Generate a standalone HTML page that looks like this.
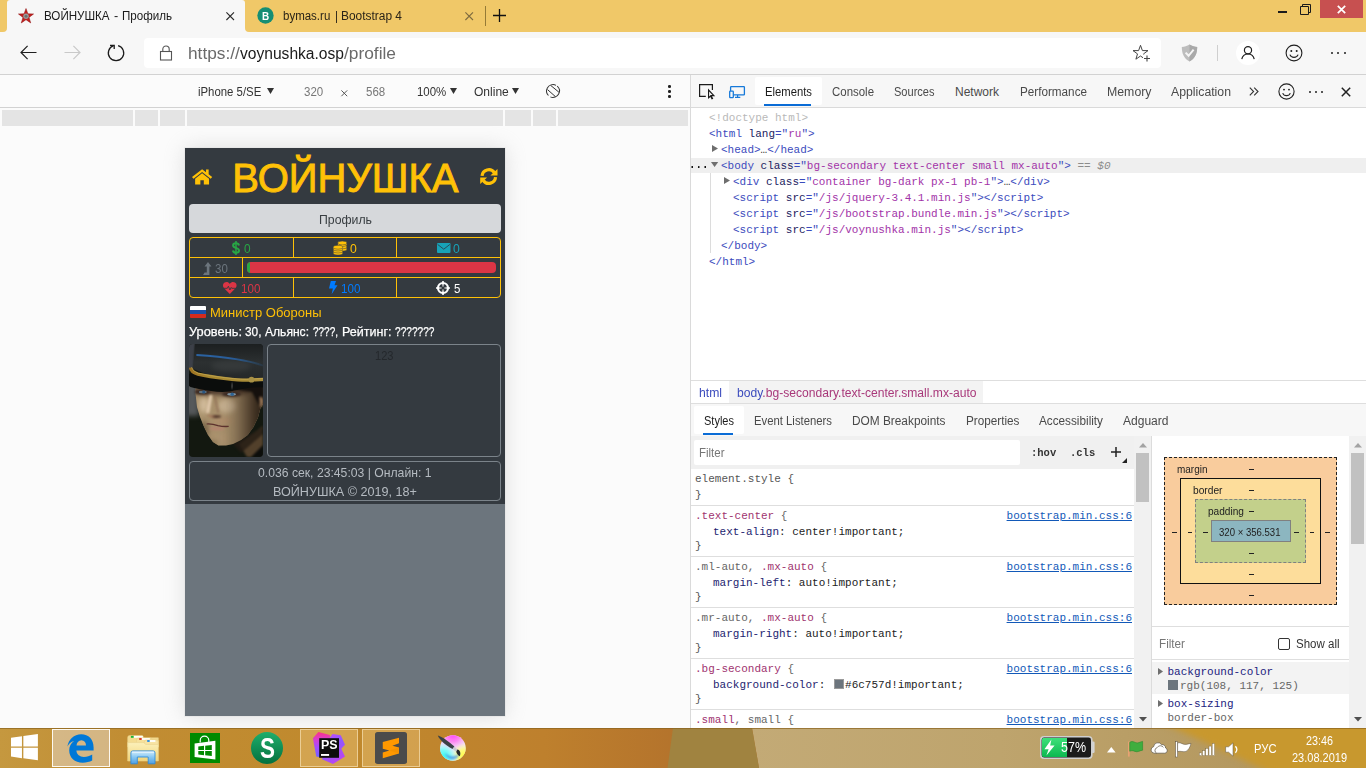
<!DOCTYPE html>
<html lang="ru"><head><meta charset="utf-8"><title>ВОЙНУШКА - Профиль</title>
<style>
html,body{margin:0;padding:0}
body{width:1366px;height:768px;overflow:hidden;position:relative;background:#f7f7f7;font-family:"Liberation Sans", "DejaVu Sans", sans-serif;}
.b{position:absolute;box-sizing:border-box}
.t{position:absolute;white-space:pre;line-height:20px;height:20px;transform-origin:0 50%;font-family:"Liberation Sans", "DejaVu Sans", sans-serif;}
.m{font-family:"Liberation Mono", "DejaVu Sans Mono", monospace;}
svg{position:absolute;overflow:visible}
</style></head>
<body>
<div class="b" style="left:0px;top:0px;width:1366px;height:32px;background:#f0c868;"></div>
<div class="b" style="left:7px;top:0px;width:238px;height:32px;background:#f7f7f7;border-radius:3px 3px 0 0;"></div>
<svg style="left:3px;top:28px;" width="4" height="4" viewBox="0 0 4 4"><path d="M4 0V4H0A4 4 0 0 0 4 0Z" fill="#f7f7f7"/></svg>
<svg style="left:245px;top:28px;" width="4" height="4" viewBox="0 0 4 4"><path d="M0 0V4H4A4 4 0 0 1 0 0Z" fill="#f7f7f7"/></svg>
<div class="b" style="left:0px;top:32px;width:1366px;height:42px;background:#f7f7f7;"></div>
<div class="b" style="left:0px;top:74px;width:1366px;height:1px;background:#d2d2d2;"></div>
<svg style="left:17.8px;top:8.2px;" width="16" height="16" viewBox="0 0 18 18"><path d="M9 0.6 L11.1 6.6 L17.5 6.7 L12.4 10.6 L14.3 16.8 L9 13.1 L3.7 16.8 L5.6 10.6 L0.5 6.7 L6.9 6.6 Z" fill="#c4201f" stroke="#8e1414" stroke-width=".6"/><circle cx="9" cy="9.4" r="3.1" fill="#9a9a9a"/><circle cx="9" cy="9.4" r="1.6" fill="#6e6e6e"/></svg>
<span class="t" style="top:6px;font-size:12px;color:#1b1b1b;left:44.30px;transform:scaleX(0.9667);">ВОЙНУШКА</span>
<span class="t" style="top:6px;font-size:12px;color:#1b1b1b;left:114.00px;transform:scaleX(1.0500);">-</span>
<span class="t" style="top:6px;font-size:12px;color:#1b1b1b;left:122.00px;transform:scaleX(0.9650);">Профиль</span>
<svg style="left:226.3px;top:12.3px;" width="8.4" height="8.4" viewBox="0 0 8.4 8.4"><path d="M.4 .4L8 8M8 .4L.4 8" stroke="#2b2b2b" stroke-width="1.1" fill="none"/></svg>
<svg style="left:256.5px;top:7.4px;" width="17" height="17" viewBox="0 0 17 17"><circle cx="8.5" cy="8.5" r="8.15" fill="#158e74"/></svg>
<span class="t" style="top:6px;font-size:10.5px;color:#fff;font-weight:700;left:261.60px;transform:scaleX(0.9481);">B</span>
<span class="t" style="top:6px;font-size:12px;color:#2a2418;left:283.30px;transform:scaleX(0.9583);">bymas.ru</span>
<span class="t" style="top:6px;font-size:12px;color:#2a2418;left:334.60px;transform:scaleX(0.9600);">|</span>
<span class="t" style="top:6px;font-size:12px;color:#2a2418;left:341.00px;transform:scaleX(0.9939);">Bootstrap 4</span>
<svg style="left:465.2px;top:12.3px;" width="8.4" height="8.4" viewBox="0 0 8.4 8.4"><path d="M.4 .4L8 8M8 .4L.4 8" stroke="#7d6a3f" stroke-width="1.1" fill="none"/></svg>
<div class="b" style="left:485px;top:6px;width:1px;height:20px;background:#957b36;"></div>
<svg style="left:493px;top:9.1px;" width="13" height="13" viewBox="0 0 13 13"><path d="M6.5 0V13M0 6.5H13" stroke="#111" stroke-width="1.3" fill="none"/></svg>
<div class="b" style="left:1278px;top:11px;width:9px;height:2px;background:#1b1b1b;"></div>
<svg style="left:1300px;top:4px;" width="12" height="12" viewBox="0 0 12 12"><path d="M.5 2.5H8.5V10.5H.5ZM2.5 2.5V.5H10.5V8.5H8.5" stroke="#1b1b1b" stroke-width="1" fill="none"/></svg>
<div class="b" style="left:1320px;top:0px;width:43px;height:18px;background:#c75050;"></div>
<svg style="left:1337px;top:5px;" width="9" height="9" viewBox="0 0 9 9"><path d="M.8 .8L8.2 8.2M8.2 .8L.8 8.2" stroke="#fff" stroke-width="1.7" fill="none"/></svg>
<svg style="left:20px;top:45px;" width="17" height="15" viewBox="0 0 17 15"><path d="M16.5 7.5H1.2M7.6 .9L1 7.5L7.6 14.1" stroke="#1f1f1f" stroke-width="1.2" fill="none"/></svg>
<svg style="left:64px;top:45px;" width="17" height="15" viewBox="0 0 17 15"><path d="M.5 7.5H15.8M9.4 .9L16 7.5L9.4 14.1" stroke="#c9c9c9" stroke-width="1.2" fill="none"/></svg>
<svg style="left:106.9px;top:44.05px;" width="18" height="18" viewBox="0 0 18 18"><path d="M11.1 1.6A7.7 7.7 0 1 1 6.6 1.7" stroke="#1b1b1b" stroke-width="1.25" fill="none"/><path d="M3 1.3H7.2V5.1" stroke="#1b1b1b" stroke-width="1.3" fill="none"/></svg>
<div class="b" style="left:144px;top:38px;width:1017px;height:30px;background:#fff;border-radius:4px;"></div>
<svg style="left:159px;top:45px;" width="14" height="16" viewBox="0 0 14 16"><rect x="1.5" y="6.5" width="11" height="8.5" fill="none" stroke="#555" stroke-width="1.1"/><path d="M3.8 6.5V4.2A3.2 3.2 0 0 1 10.2 4.2V6.5" fill="none" stroke="#555" stroke-width="1.1"/></svg>
<span class="t" style="top:44px;font-size:16px;color:#6a6a6a;left:188.30px;transform:scaleX(1.0785);">https://</span>
<span class="t" style="top:44px;font-size:16px;color:#1b1b1b;left:239.60px;transform:scaleX(0.9744);">voynushka.osp</span>
<span class="t" style="top:44px;font-size:16px;color:#6a6a6a;left:343.60px;transform:scaleX(1.0826);">/profile</span>
<svg style="left:1132px;top:44px;" width="19" height="18" viewBox="0 0 19 18"><path d="M8.5 1.3L10.4 6.6H16L11.5 9.9L13.1 15.2L8.5 12L3.9 15.2L5.5 9.9L1 6.6H6.6Z" fill="none" stroke="#444" stroke-width="1"/><rect x="11" y="10.5" width="8" height="7.5" fill="#fff"/><path d="M15 11.5V17.5M12 14.5H18" stroke="#444" stroke-width="1.1"/></svg>
<svg style="left:1181px;top:44px;" width="17" height="18" viewBox="0 0 17 18"><path d="M8.5 .6C6 2.2 3.4 2.9 .8 3C.8 9.5 3 14.6 8.5 17.4C14 14.6 16.2 9.5 16.2 3C13.6 2.9 11 2.2 8.5 .6Z" fill="#bdbdbd"/><path d="M8.5 .6C11 2.2 13.6 2.9 16.2 3C16.2 9.5 14 14.6 8.5 17.4Z" fill="#a9a9a9"/><path d="M4.6 8.6L7.6 11.8L12.6 5.6" stroke="#f4f4f4" stroke-width="2" fill="none"/></svg>
<div class="b" style="left:1217px;top:45px;width:1px;height:16px;background:#cfcfcf;"></div>
<svg style="left:1236px;top:41px;" width="24" height="24" viewBox="0 0 24 24"><circle cx="12" cy="12" r="12" fill="#fff"/><circle cx="12" cy="9.2" r="3.6" fill="none" stroke="#1f1f1f" stroke-width="1.2"/><path d="M5.8 18.2A6.3 6.3 0 0 1 18.2 18.2" fill="none" stroke="#1f1f1f" stroke-width="1.2"/></svg>
<svg style="left:1285px;top:44px;" width="18" height="18" viewBox="0 0 18 18"><circle cx="9" cy="9" r="7.9" fill="none" stroke="#1f1f1f" stroke-width="1.1"/><circle cx="6.3" cy="6.9" r="1" fill="#1f1f1f"/><circle cx="11.7" cy="6.9" r="1" fill="#1f1f1f"/><path d="M4.9 10.6A4.4 4.4 0 0 0 13.1 10.6" fill="none" stroke="#1f1f1f" stroke-width="1.1"/></svg>
<div class="b" style="left:1330.5px;top:52px;width:2px;height:2px;background:#1f1f1f;border-radius:1px;"></div>
<div class="b" style="left:1337.0px;top:52px;width:2px;height:2px;background:#1f1f1f;border-radius:1px;"></div>
<div class="b" style="left:1343.5px;top:52px;width:2px;height:2px;background:#1f1f1f;border-radius:1px;"></div>
<div class="b" style="left:0px;top:75px;width:690px;height:32px;background:#fbfbfb;"></div>
<div class="b" style="left:0px;top:107px;width:690px;height:1px;background:#d2d2d2;"></div>
<div class="b" style="left:0px;top:108px;width:690px;height:620px;background:#fbfbfb;"></div>
<span class="t" style="top:82px;font-size:12px;color:#333;left:198.20px;transform:scaleX(0.9488);">iPhone 5/SE</span>
<svg style="left:267.2px;top:88.4px;" width="7" height="6" viewBox="0 0 7 6"><path d="M0 0H7L3.5 6Z" fill="#333"/></svg>
<span class="t" style="top:82px;font-size:12px;color:#777;left:303.50px;transform:scaleX(0.9585);">320</span>
<svg style="left:340.8px;top:90.2px;" width="6.6" height="6.6" viewBox="0 0 6.6 6.6"><path d="M.4 .4L6.2 6.2M6.2 .4L.4 6.2" stroke="#555" stroke-width="1" fill="none"/></svg>
<span class="t" style="top:82px;font-size:12px;color:#777;left:365.60px;transform:scaleX(0.9585);">568</span>
<span class="t" style="top:82px;font-size:12px;color:#333;left:417.00px;transform:scaleX(0.9543);">100%</span>
<svg style="left:450.2px;top:88.4px;" width="7" height="6" viewBox="0 0 7 6"><path d="M0 0H7L3.5 6Z" fill="#333"/></svg>
<span class="t" style="top:82px;font-size:12px;color:#333;left:474.00px;transform:scaleX(1.0032);">Online</span>
<svg style="left:512.4px;top:88.4px;" width="7" height="6" viewBox="0 0 7 6"><path d="M0 0H7L3.5 6Z" fill="#333"/></svg>
<svg style="left:546px;top:84px;" width="14" height="14" viewBox="0 0 14 14"><circle cx="7" cy="7" r="6.4" fill="none" stroke="#333" stroke-width="1" stroke-dasharray="17.6 2.5" stroke-dashoffset="-1.5" transform="rotate(-62 7 7)"/><path d="M1.5 5.6L9.2 12.4M4.8 1.5L12.9 8.2" stroke="#333" stroke-width="1" fill="none"/></svg>
<div class="b" style="left:668px;top:85.2px;width:2.6px;height:2.6px;background:#222;border-radius:1.3px;"></div>
<div class="b" style="left:668px;top:90.2px;width:2.6px;height:2.6px;background:#222;border-radius:1.3px;"></div>
<div class="b" style="left:668px;top:95.2px;width:2.6px;height:2.6px;background:#222;border-radius:1.3px;"></div>
<div class="b" style="left:2px;top:110px;width:686px;height:16px;background:#e4e4e4;"></div>
<div class="b" style="left:133px;top:110px;width:2px;height:16px;background:#fbfbfb;"></div>
<div class="b" style="left:158px;top:110px;width:2px;height:16px;background:#fbfbfb;"></div>
<div class="b" style="left:185px;top:110px;width:2px;height:16px;background:#fbfbfb;"></div>
<div class="b" style="left:503px;top:110px;width:2px;height:16px;background:#fbfbfb;"></div>
<div class="b" style="left:531px;top:110px;width:2px;height:16px;background:#fbfbfb;"></div>
<div class="b" style="left:556px;top:110px;width:2px;height:16px;background:#fbfbfb;"></div>
<div class="b" style="left:185px;top:148px;width:320px;height:568px;background:#6c757d;box-shadow:0 0 0 .5px #e0e0e0,0 0 20px rgba(190,190,190,.45);"></div>
<div class="b" style="left:185px;top:148px;width:320px;height:356px;background:#343a40;"></div>
<svg style="left:192.1px;top:168.7px;" width="20.2" height="15.5" viewBox="0 0 20 16" preserveAspectRatio="none"><path d="M10 .2L0 8.3L1.5 10.1L10 3.2L18.5 10.1L20 8.3L16.5 5.5V.4H13.9V3.4Z" fill="#ffc107"/><path d="M10 4.4L3.1 10V15.9H8.3V11.6H11.7V15.9H16.9V10Z" fill="#ffc107"/></svg>
<span class="t" style="top:168px;font-size:40px;color:#ffc107;-webkit-text-stroke:.9px #ffc107;left:232.30px;">ВОЙНУШКА</span>
<svg style="left:479.6px;top:167.9px;" width="17.5" height="17.1" viewBox="0 0 17.5 17.1"><path d="M2.05 7.9A6.75 6.75 0 0 1 14.3 4.6" fill="none" stroke="#ffc107" stroke-width="3.2"/><path d="M17.5 1V7.5H10.4Z" fill="#ffc107"/><path d="M15.55 9.2A6.75 6.75 0 0 1 3.3 12.5" fill="none" stroke="#ffc107" stroke-width="3.2"/><path d="M.2 16.1V9.6H7.1Z" fill="#ffc107"/></svg>
<div class="b" style="left:189px;top:204px;width:312px;height:29px;background:#d6d8db;border-radius:4px;"></div>
<span class="t" style="top:210px;font-size:12.8px;color:#383d41;left:318.80px;transform:scaleX(0.9593);">Профиль</span>
<div class="b" style="left:189px;top:237px;width:312px;height:61px;border:1px solid #ffc107;border-radius:4px;"></div>
<div class="b" style="left:190px;top:257px;width:310px;height:1px;background:#ffc107;"></div>
<div class="b" style="left:190px;top:277px;width:310px;height:1px;background:#ffc107;"></div>
<div class="b" style="left:293px;top:238px;width:1px;height:19px;background:#ffc107;"></div>
<div class="b" style="left:396px;top:238px;width:1px;height:19px;background:#ffc107;"></div>
<div class="b" style="left:242px;top:258px;width:1px;height:19px;background:#ffc107;"></div>
<div class="b" style="left:293px;top:278px;width:1px;height:19px;background:#ffc107;"></div>
<div class="b" style="left:396px;top:278px;width:1px;height:19px;background:#ffc107;"></div>
<svg style="left:232.1px;top:241px;" width="8" height="14" viewBox="0 0 8 14"><path d="M4 0V14" stroke="#28a745" stroke-width="1.5"/><path d="M7 4.4C6.6 2.8 5.4 2.3 4 2.3C2.2 2.3 1.1 3.2 1.1 4.5C1.1 7.6 7 6.2 7 9.5C7 10.9 5.8 11.8 4 11.8C2.3 11.8 1.2 11 .9 9.5" fill="none" stroke="#28a745" stroke-width="2"/></svg>
<span class="t" style="top:239px;font-size:12.8px;color:#28a745;left:243.80px;transform:scaleX(0.9263);">0</span>
<svg style="left:333px;top:241px;" width="14" height="14" viewBox="0 0 14 14"><g fill="#ffc107" stroke="#343a40" stroke-width=".5"><ellipse cx="9.3" cy="8.2" rx="4.6" ry="1.9"/><ellipse cx="9.3" cy="5.9" rx="4.6" ry="1.9"/><ellipse cx="9.3" cy="3.6" rx="4.6" ry="1.9"/><ellipse cx="9.3" cy="2" rx="4.6" ry="1.9"/><ellipse cx="5" cy="12" rx="4.8" ry="2"/><ellipse cx="5" cy="10" rx="4.8" ry="2"/><ellipse cx="5" cy="8" rx="4.8" ry="2"/><ellipse cx="5" cy="6.2" rx="4.8" ry="2"/></g></svg>
<span class="t" style="top:239px;font-size:12.8px;color:#ffc107;left:350.30px;transform:scaleX(0.9544);">0</span>
<svg style="left:436.5px;top:243px;" width="13.5" height="10" viewBox="0 0 13.5 10"><rect width="13.5" height="10" rx="1" fill="#17a2b8"/><path d="M.6 1.4L6.75 6.2L12.9 1.4" fill="none" stroke="#2b4a58" stroke-width="1"/></svg>
<span class="t" style="top:239px;font-size:12.8px;color:#17a2b8;left:453.00px;transform:scaleX(0.9544);">0</span>
<svg style="left:203px;top:261.5px;" width="8.5" height="13.2" viewBox="0 0 8.5 13.2"><path d="M5 0L8.5 4.6H6.4V13H0L1.6 10.6H3.8V4.6H1.5Z" fill="#6c757d"/></svg>
<span class="t" style="top:259px;font-size:12.8px;color:#6c757d;left:215.40px;transform:scaleX(0.8992);">30</span>
<div class="b" style="left:247px;top:262px;width:249px;height:11px;background:#dc3545;border-radius:4px;overflow:hidden;"><div style="width:3px;height:11px;background:#28a745"></div></div>
<svg style="left:223.4px;top:282px;" width="13.6" height="12" viewBox="0 0 13.6 12"><path d="M6.8 12L.9 6C-.6 4.3-.2 1.6 1.6 .6C3.3-.4 5.4 0 6.8 1.9C8.2 0 10.3-.4 12 .6C13.8 1.6 14.2 4.3 12.7 6Z" fill="#dc3545"/><path d="M.4 6.3H4.3L5.4 4.2L6.9 8L8.2 5.4L8.8 6.3H13.2" fill="none" stroke="#343a40" stroke-width=".9"/></svg>
<span class="t" style="top:279px;font-size:12.8px;color:#dc3545;left:241.30px;transform:scaleX(0.9083);">100</span>
<svg style="left:328.5px;top:281.4px;" width="8.5" height="13.2" viewBox="0 0 8.5 13.2"><path d="M1.8 0H7L5.5 4.3H8.5L2.6 13.2L3.9 7.5H0Z" fill="#007bff"/></svg>
<span class="t" style="top:279px;font-size:12.8px;color:#007bff;left:341.30px;transform:scaleX(0.9083);">100</span>
<svg style="left:436px;top:281px;" width="14" height="14" viewBox="0 0 14 14"><circle cx="7" cy="7" r="5" fill="none" stroke="#fff" stroke-width="2.2"/><path d="M7 0V14M0 7H14" stroke="#fff" stroke-width="1.6"/><rect x="5.6" y="5.6" width="2.8" height="2.8" fill="#343a40"/><path d="M7 3.6V10.4M3.6 7H10.4" stroke="#343a40" stroke-width=".7"/></svg>
<span class="t" style="top:279px;font-size:12.8px;color:#fff;left:453.50px;transform:scaleX(0.8982);">5</span>
<div class="b" style="left:190px;top:306px;width:16px;height:12px;border-radius:1px;overflow:hidden;background:linear-gradient(#fff 0 33.3%,#1c4fa8 33.3% 66.6%,#d52b1e 66.6%);"></div>
<span class="t" style="top:303px;font-size:12.8px;color:#ffc107;left:210.00px;transform:scaleX(1.0149);">Министр Обороны</span>
<span class="t" style="top:322px;font-size:12.8px;color:#fff;-webkit-text-stroke:.25px #fff;left:189.00px;transform:scaleX(1.0027);">Уровень:</span>
<span class="t" style="top:322px;font-size:12.8px;color:#fff;-webkit-text-stroke:.25px #fff;left:245.00px;transform:scaleX(0.9271);">30,</span>
<span class="t" style="top:322px;font-size:12.8px;color:#fff;-webkit-text-stroke:.25px #fff;left:264.80px;transform:scaleX(0.9437);">Альянс:</span>
<span class="t" style="top:322px;font-size:12.8px;color:#fff;-webkit-text-stroke:.25px #fff;left:312.60px;transform:scaleX(0.7805);">????,</span>
<span class="t" style="top:322px;font-size:12.8px;color:#fff;-webkit-text-stroke:.25px #fff;left:342.20px;transform:scaleX(0.9793);">Рейтинг:</span>
<span class="t" style="top:322px;font-size:12.8px;color:#fff;-webkit-text-stroke:.25px #fff;left:395.00px;transform:scaleX(0.7927);">???????</span>
<svg style="left:189px;top:344px;border-radius:4px;overflow:hidden" width="74" height="113" viewBox="0 0 74 113">
<defs>
<filter color-interpolation-filters="sRGB" id="b0" x="-20%" y="-20%" width="140%" height="140%"><feGaussianBlur stdDeviation=".45"/></filter>
<filter color-interpolation-filters="sRGB" id="b1" x="-20%" y="-20%" width="140%" height="140%"><feGaussianBlur stdDeviation="1.1"/></filter>
<filter color-interpolation-filters="sRGB" id="b2" x="-30%" y="-30%" width="160%" height="160%"><feGaussianBlur stdDeviation="2.4"/></filter>
<filter color-interpolation-filters="sRGB" id="b3" x="-30%" y="-30%" width="160%" height="160%"><feGaussianBlur stdDeviation="4"/></filter>
<clipPath id="fcl"><path d="M6.6 44V50L8 63L11 73L14.7 82L19 91L24 98L29.4 101.6L37 101.5L44 100L52 96L58.8 91L64.5 83L69 73.5L71.5 64L74 60V44Z"/></clipPath>
<linearGradient id="fsh2" gradientUnits="userSpaceOnUse" x1="5" y1="0" x2="76" y2="0"><stop offset="0" stop-color="#24170e" stop-opacity="0"/><stop offset=".42" stop-color="#24170e" stop-opacity=".04"/><stop offset=".58" stop-color="#24170e" stop-opacity=".24"/><stop offset=".72" stop-color="#24170e" stop-opacity=".52"/><stop offset=".86" stop-color="#20140c" stop-opacity=".78"/><stop offset="1" stop-color="#1a120c" stop-opacity=".92"/></linearGradient>
<linearGradient id="capg" x1="0" y1="0" x2="0" y2="1"><stop offset="0" stop-color="#1b1e1f"/><stop offset=".5" stop-color="#2c3031"/><stop offset="1" stop-color="#232627"/></linearGradient>
<linearGradient id="blu" gradientUnits="userSpaceOnUse" x1="7" y1="0" x2="74" y2="0"><stop offset="0" stop-color="#2b64a4"/><stop offset=".55" stop-color="#295c98"/><stop offset=".8" stop-color="#2a5c90" stop-opacity=".6"/><stop offset="1" stop-color="#2a5a8c" stop-opacity=".2"/></linearGradient>
<linearGradient id="gold" gradientUnits="userSpaceOnUse" x1="0" y1="0" x2="74" y2="0"><stop offset="0" stop-color="#9c701f"/><stop offset=".25" stop-color="#a7872f"/><stop offset="1" stop-color="#ab8f3c"/></linearGradient>
</defs>
<rect width="74" height="113" fill="#131810"/>
<rect x="-4" y="34" width="14" height="38" fill="#56595b" filter="url(#b2)"/>
<path d="M-2 -2H6.5L4.5 26H-2Z" fill="#3c4048" filter="url(#b1)"/>
<g filter="url(#b1)">
<path d="M50 100L62 91L74 82V113H58Z" fill="#52402b"/>
<path d="M62 113L74 101V113Z" fill="#0c0d0b"/>
<path d="M44 100L74 83V90L52 109Z" fill="#241c14" opacity=".8"/>
</g>
<path d="M6.6 44V50L8 63L11 73L14.7 82L19 91L24 98L29.4 101.6L37 101.5L44 100L52 96L58.8 91L64.5 83L69 73.5L71.5 64L74 60V44Z" fill="#ac946f" filter="url(#b0)"/>
<g clip-path="url(#fcl)">
<g filter="url(#b2)">
<ellipse cx="15" cy="61" rx="5" ry="8" fill="#d3bd9c"/>
<ellipse cx="38" cy="62" rx="9" ry="7" fill="#cbb594"/>
<ellipse cx="31" cy="94" rx="8" ry="4.5" fill="#b09672"/><ellipse cx="15" cy="86" rx="5" ry="9" fill="#7d694c"/><ellipse cx="22" cy="99" rx="7" ry="3" fill="#8a7454"/>
<ellipse cx="34" cy="77" rx="10" ry="3" fill="#b5916f"/>
<ellipse cx="30" cy="47" rx="32" ry="4" fill="#4c372b"/>
</g>
<rect x="-10" y="30" width="100" height="90" fill="url(#fsh2)" filter="url(#b2)"/>
</g>
<g filter="url(#b1)">
<path d="M44 38H74V57L70 61L63 48L46 45.5Z" fill="#15100d"/>
<path d="M70.5 53Q74 52 74 58Q73 64 71 63Z" fill="#a07c5a"/>
<path d="M22 51L20 61L18.6 69" fill="none" stroke="#e2cbae" stroke-width="3"/>
<path d="M25.8 52L27.8 62L29.4 69" fill="none" stroke="#8a6650" stroke-width="1.9" opacity=".7"/>
<ellipse cx="27" cy="72.6" rx="5.2" ry="1.3" fill="#4e3126"/>
<path d="M19 71.3Q22 73.3 25 72.3" fill="none" stroke="#a46a55" stroke-width="1.2"/>
<ellipse cx="13.5" cy="48" rx="8" ry="2.6" fill="#3a2922"/>
<ellipse cx="42.6" cy="50.2" rx="9.5" ry="2.6" fill="#3a2922"/>
<ellipse cx="28" cy="84.6" rx="8" ry="1.6" fill="#b68470"/>
</g>
<g filter="url(#b0)">
<ellipse cx="13.8" cy="48" rx="4" ry="1.3" fill="#5f717e"/>
<circle cx="14.8" cy="47.9" r="1.6" fill="#2a557f"/>
<ellipse cx="42.6" cy="50.3" rx="4.4" ry="1.4" fill="#7d93a3"/>
<circle cx="43.2" cy="50.3" r="1.7" fill="#2f6392"/>
<path d="M17.6 80Q23 79.6 29 81.6Q34 82.8 39.7 82.4" fill="none" stroke="#5c312d" stroke-width="1.25"/>
</g>
<g filter="url(#b0)">
<path d="M6 -1H75V38L50 35.6L20 31.5L4.5 25Z" fill="url(#capg)"/>
<path d="M-1 33Q0 27 6 29L30 33.5L74 38V43Q60 43 48 46Q36 49.5 22 47Q8 45 1.5 43Q-1 42 -1 38Z" fill="#0b0d0c"/>
</g>
<ellipse cx="42" cy="22" rx="20" ry="5.5" fill="#3d4142" opacity=".6" filter="url(#b2)"/>
<path d="M43.8 39L42.8 44.5" stroke="#555" stroke-width="2" filter="url(#b1)"/>
<path d="M7.4 11Q30 12.2 48.5 15.4T74 21.6" fill="none" stroke="url(#blu)" stroke-width="1.8" filter="url(#b0)"/>
<g filter="url(#b0)">
<path d="M1.6 23.6Q2 28 8.8 30.1Q20 32.6 36.8 34.6T61.8 36L74 35.4" fill="none" stroke="url(#gold)" stroke-width="3.4"/>
<path d="M2.4 23.2Q3.4 27 9 29.2Q20 31.8 36.8 33.8T61.8 35.1L74 34.5" fill="none" stroke="#cbb05a" stroke-width=".8" opacity=".75"/>
<circle cx="62.5" cy="35.7" r="2.9" fill="#a89146"/>
</g>
</svg>
<div class="b" style="left:267px;top:344px;width:234px;height:113px;border:1px solid #7b838a;border-radius:4px;"></div>
<span class="t" style="top:346px;font-size:12.8px;color:#24282c;left:375.05px;transform:scaleX(0.8661);">123</span>
<div class="b" style="left:189px;top:461px;width:312px;height:40px;border:1px solid #7b838a;border-radius:4px;"></div>
<span class="t" style="top:463px;font-size:12.8px;color:#b5bbc1;left:257.75px;transform:scaleX(0.9527);">0.036 сек, 23:45:03 | Онлайн: 1</span>
<span class="t" style="top:482px;font-size:12.8px;color:#b5bbc1;left:272.60px;transform:scaleX(0.9850);">ВОЙНУШКА © 2019, 18+</span>
<div class="b" style="left:690px;top:75px;width:676px;height:653px;background:#fff;"></div>
<div class="b" style="left:690px;top:75px;width:1px;height:653px;background:#dadada;"></div>
<div class="b" style="left:691px;top:75px;width:675px;height:32px;background:#f7f7f7;"></div>
<div class="b" style="left:691px;top:107px;width:675px;height:1px;background:#dadada;"></div>
<svg style="left:699px;top:84px;" width="17" height="16" viewBox="0 0 17 16"><path d="M13.4 6V.6H.6V12.4H6.8" fill="none" stroke="#1b1b1b" stroke-width="1.2"/><path d="M9 4.6V15L11.4 12.9L12.7 15.6L14.3 14.8L13 12.2H16.2Z" fill="#1b1b1b" stroke="#f7f7f7" stroke-width=".9" paint-order="stroke"/><path d="M10.1 7.4V12.4L11.7 11L12.9 11H13.5Z" fill="#f7f7f7"/></svg>
<svg style="left:729px;top:86px;" width="17" height="13" viewBox="0 0 17 13"><rect x="1.6" y=".7" width="13.8" height="8.2" rx=".6" fill="none" stroke="#1679d9" stroke-width="1.3"/><path d="M6 11.3H11.3M8.6 8.9V11.3" stroke="#1679d9" stroke-width="1.2"/><rect x=".7" y="5.1" width="3.6" height="6.6" rx=".7" fill="#f7f7f7" stroke="#1679d9" stroke-width="1.3"/></svg>
<div class="b" style="left:755px;top:77px;width:67px;height:28px;background:#fff;border-radius:2px;"></div>
<div class="b" style="left:764px;top:103.5px;width:47px;height:2.5px;background:#0a6cd6;"></div>
<span class="t" style="top:82px;font-size:12px;color:#1b1b1b;left:765.00px;transform:scaleX(0.9394);">Elements</span>
<span class="t" style="top:82px;font-size:12px;color:#4a4a4a;left:832.00px;transform:scaleX(0.9539);">Console</span>
<span class="t" style="top:82px;font-size:12px;color:#4a4a4a;left:894.00px;transform:scaleX(0.9198);">Sources</span>
<span class="t" style="top:82px;font-size:12px;color:#4a4a4a;left:955.00px;">Network</span>
<span class="t" style="top:82px;font-size:12px;color:#4a4a4a;left:1019.50px;transform:scaleX(0.9752);">Performance</span>
<span class="t" style="top:82px;font-size:12px;color:#4a4a4a;left:1106.50px;transform:scaleX(1.0267);">Memory</span>
<span class="t" style="top:82px;font-size:12px;color:#4a4a4a;left:1170.50px;transform:scaleX(1.0218);">Application</span>
<svg style="left:1249px;top:87px;" width="10" height="9" viewBox="0 0 10 9"><path d="M.8 .6L4.6 4.5L.8 8.4M5.2 .6L9 4.5L5.2 8.4" fill="none" stroke="#333" stroke-width="1.1"/></svg>
<svg style="left:1277.5px;top:83px;" width="17" height="17" viewBox="0 0 17 17"><circle cx="8.5" cy="8.5" r="7.6" fill="none" stroke="#222" stroke-width="1.1"/><circle cx="6" cy="6.6" r=".95" fill="#222"/><circle cx="11" cy="6.6" r=".95" fill="#222"/><path d="M4.7 10.1A4.1 4.1 0 0 0 12.3 10.1" fill="none" stroke="#222" stroke-width="1.1"/></svg>
<div class="b" style="left:1309px;top:91px;width:2px;height:2px;background:#222;border-radius:1px;"></div>
<div class="b" style="left:1315px;top:91px;width:2px;height:2px;background:#222;border-radius:1px;"></div>
<div class="b" style="left:1321px;top:91px;width:2px;height:2px;background:#222;border-radius:1px;"></div>
<svg style="left:1341px;top:87px;" width="10" height="10" viewBox="0 0 10 10"><path d="M.8 .8L9.2 9.2M9.2 .8L.8 9.2" stroke="#222" stroke-width="1.5" fill="none"/></svg>
<div class="b" style="left:691px;top:158px;width:675px;height:15px;background:#efefef;"></div>
<div class="b" style="left:710px;top:173px;width:1px;height:80px;background:#dcdcdc;"></div>
<span class="t m" style="top:108px;font-size:11px;color:#b9b9b9;left:709.00px;">&lt;!doctype html&gt;</span>
<span class="t m" style="top:124px;font-size:11px;color:#3b4bbd;left:709.00px;"><span style="color:#3b4bbd">&lt;html </span><span style="color:#1b1b60">lang</span><span style="color:#3b4bbd">="</span><span style="color:#a233a8">ru</span><span style="color:#3b4bbd">"&gt;</span></span>
<svg style="left:711.6px;top:145px;" width="6" height="7" viewBox="0 0 6 7"><path d="M0 0V7L6 3.5Z" fill="#6e6e6e"/></svg>
<span class="t m" style="top:140px;font-size:11px;color:#3b4bbd;left:721.00px;"><span style="color:#3b4bbd">&lt;head&gt;</span><span style="color:#333">…</span><span style="color:#3b4bbd">&lt;/head&gt;</span></span>
<span class="t m" style="top:155px;font-size:12px;color:#111;font-weight:700;left:689.30px;transform:scaleX(0.8978);">...</span>
<svg style="left:711px;top:162px;" width="7.2" height="5" viewBox="0 0 7.2 5"><path d="M0 0H7.2L3.6 5Z" fill="#6e6e6e"/></svg>
<span class="t m" style="top:156px;font-size:11px;color:#3b4bbd;left:721.00px;"><span style="color:#3b4bbd">&lt;body </span><span style="color:#1b1b60">class</span><span style="color:#3b4bbd">="</span><span style="color:#a233a8">bg-secondary text-center small mx-auto</span><span style="color:#3b4bbd">"&gt;</span><span style="color:#8c8c8c"> == </span><span style="color:#8c8c8c;font-style:italic">$0</span></span>
<svg style="left:723.6px;top:177px;" width="6" height="7" viewBox="0 0 6 7"><path d="M0 0V7L6 3.5Z" fill="#6e6e6e"/></svg>
<span class="t m" style="top:172px;font-size:11px;color:#3b4bbd;left:733.00px;"><span style="color:#3b4bbd">&lt;div </span><span style="color:#1b1b60">class</span><span style="color:#3b4bbd">="</span><span style="color:#a233a8">container bg-dark px-1 pb-1</span><span style="color:#3b4bbd">"&gt;</span><span style="color:#333">…</span><span style="color:#3b4bbd">&lt;/div&gt;</span></span>
<span class="t m" style="top:188px;font-size:11px;color:#3b4bbd;left:733.00px;"><span style="color:#3b4bbd">&lt;script </span><span style="color:#1b1b60">src</span><span style="color:#3b4bbd">="</span><span style="color:#a233a8">/js/jquery-3.4.1.min.js</span><span style="color:#3b4bbd">"&gt;&lt;/script&gt;</span></span>
<span class="t m" style="top:204px;font-size:11px;color:#3b4bbd;left:733.00px;"><span style="color:#3b4bbd">&lt;script </span><span style="color:#1b1b60">src</span><span style="color:#3b4bbd">="</span><span style="color:#a233a8">/js/bootstrap.bundle.min.js</span><span style="color:#3b4bbd">"&gt;&lt;/script&gt;</span></span>
<span class="t m" style="top:220px;font-size:11px;color:#3b4bbd;left:733.00px;"><span style="color:#3b4bbd">&lt;script </span><span style="color:#1b1b60">src</span><span style="color:#3b4bbd">="</span><span style="color:#a233a8">/js/voynushka.min.js</span><span style="color:#3b4bbd">"&gt;&lt;/script&gt;</span></span>
<span class="t m" style="top:236px;font-size:11px;color:#3b4bbd;left:721.00px;"><span style="color:#3b4bbd">&lt;/body&gt;</span></span>
<span class="t m" style="top:252px;font-size:11px;color:#3b4bbd;left:709.00px;"><span style="color:#3b4bbd">&lt;/html&gt;</span></span>
<div class="b" style="left:691px;top:380px;width:675px;height:1px;background:#dedede;"></div>
<div class="b" style="left:729px;top:381px;width:254px;height:22px;background:#f3f3f3;"></div>
<div class="b" style="left:691px;top:403px;width:675px;height:1px;background:#dedede;"></div>
<span class="t" style="top:383px;font-size:12px;color:#3b4bbd;left:698.50px;transform:scaleX(1.0145);">html</span>
<span class="t" style="top:383px;font-size:12px;color:#a8387a;left:736.50px;transform:scaleX(1.0077);"><span style="color:#3b4bbd">body</span><span style="color:#a8387a">.bg-secondary.text-center.small.mx-auto</span></span>
<div class="b" style="left:691px;top:404px;width:675px;height:32px;background:#f7f7f7;"></div>
<div class="b" style="left:694px;top:406px;width:50px;height:28px;background:#fff;border-radius:2px;"></div>
<div class="b" style="left:703px;top:432.5px;width:30px;height:2.5px;background:#0a6cd6;"></div>
<span class="t" style="top:411px;font-size:12px;color:#1b1b1b;left:703.70px;transform:scaleX(0.9178);">Styles</span>
<span class="t" style="top:411px;font-size:12px;color:#4a4a4a;left:753.70px;transform:scaleX(0.9430);">Event Listeners</span>
<span class="t" style="top:411px;font-size:12px;color:#4a4a4a;left:851.50px;transform:scaleX(0.9873);">DOM Breakpoints</span>
<span class="t" style="top:411px;font-size:12px;color:#4a4a4a;left:965.70px;transform:scaleX(0.9780);">Properties</span>
<span class="t" style="top:411px;font-size:12px;color:#4a4a4a;left:1038.50px;transform:scaleX(0.9792);">Accessibility</span>
<span class="t" style="top:411px;font-size:12px;color:#4a4a4a;left:1122.70px;transform:scaleX(1.0028);">Adguard</span>
<div class="b" style="left:691px;top:436px;width:443px;height:33px;background:#f0f0f0;"></div>
<div class="b" style="left:694px;top:439.5px;width:326px;height:25.5px;background:#fff;border-radius:2px;"></div>
<span class="t" style="top:443px;font-size:12px;color:#767676;left:698.70px;transform:scaleX(0.9561);">Filter</span>
<span class="t m" style="top:443px;font-size:11px;color:#333;font-weight:700;left:1031.20px;transform:scaleX(0.9543);">:hov</span>
<span class="t m" style="top:443px;font-size:11px;color:#333;font-weight:700;left:1069.60px;transform:scaleX(0.9543);">.cls</span>
<svg style="left:1111px;top:447px;" width="10" height="10" viewBox="0 0 10 10"><path d="M5 0V10M0 5H10" stroke="#222" stroke-width="1.5"/></svg>
<svg style="left:1122px;top:458px;" width="5" height="5" viewBox="0 0 5 5"><path d="M5 0V5H0Z" fill="#222"/></svg>
<span class="t m" style="top:469px;font-size:11px;color:#555;left:695.00px;">element.style {</span>
<span class="t m" style="top:485px;font-size:11px;color:#555;left:695.00px;">}</span>
<div class="b" style="left:691px;top:505px;width:443px;height:1px;background:#dedede;"></div>
<span class="t m" style="top:506px;font-size:11px;color:#555;left:695.00px;"><span style="color:#a0336f">.text-center</span><span style="color:#666"> {</span></span>
<span class="t m" style="top:506px;font-size:11px;color:#1259b8;text-decoration:underline;left:1006.58px;">bootstrap.min.css:6</span>
<span class="t m" style="top:522px;font-size:11px;color:#555;left:713.00px;"><span style="color:#1d1d70">text-align</span><span style="color:#222">: center!important;</span></span>
<span class="t m" style="top:536px;font-size:11px;color:#555;left:695.00px;">}</span>
<div class="b" style="left:691px;top:556px;width:443px;height:1px;background:#dedede;"></div>
<span class="t m" style="top:557px;font-size:11px;color:#555;left:695.00px;"><span style="color:#666">.ml-auto, </span><span style="color:#a0336f">.mx-auto</span><span style="color:#666"> {</span></span>
<span class="t m" style="top:557px;font-size:11px;color:#1259b8;text-decoration:underline;left:1006.58px;">bootstrap.min.css:6</span>
<span class="t m" style="top:573px;font-size:11px;color:#555;left:713.00px;"><span style="color:#1d1d70">margin-left</span><span style="color:#222">: auto!important;</span></span>
<span class="t m" style="top:587px;font-size:11px;color:#555;left:695.00px;">}</span>
<div class="b" style="left:691px;top:607px;width:443px;height:1px;background:#dedede;"></div>
<span class="t m" style="top:608px;font-size:11px;color:#555;left:695.00px;"><span style="color:#666">.mr-auto, </span><span style="color:#a0336f">.mx-auto</span><span style="color:#666"> {</span></span>
<span class="t m" style="top:608px;font-size:11px;color:#1259b8;text-decoration:underline;left:1006.58px;">bootstrap.min.css:6</span>
<span class="t m" style="top:624px;font-size:11px;color:#555;left:713.00px;"><span style="color:#1d1d70">margin-right</span><span style="color:#222">: auto!important;</span></span>
<span class="t m" style="top:638px;font-size:11px;color:#555;left:695.00px;">}</span>
<div class="b" style="left:691px;top:658px;width:443px;height:1px;background:#dedede;"></div>
<span class="t m" style="top:659px;font-size:11px;color:#555;left:695.00px;"><span style="color:#a0336f">.bg-secondary</span><span style="color:#666"> {</span></span>
<span class="t m" style="top:659px;font-size:11px;color:#1259b8;text-decoration:underline;left:1006.58px;">bootstrap.min.css:6</span>
<span class="t m" style="top:675px;font-size:11px;color:#555;left:713.00px;"><span style="color:#1d1d70">background-color</span><span style="color:#222">:   #6c757d!important;</span></span>
<div class="b" style="left:834px;top:678.5px;width:10px;height:10px;background:#6c757d;border:1px solid #9a9a9a;"></div>
<span class="t m" style="top:689px;font-size:11px;color:#555;left:695.00px;">}</span>
<div class="b" style="left:691px;top:709px;width:443px;height:1px;background:#dedede;"></div>
<span class="t m" style="top:710px;font-size:11px;color:#555;left:695.00px;"><span style="color:#a0336f">.small</span><span style="color:#666">, small</span><span style="color:#666"> {</span></span>
<span class="t m" style="top:710px;font-size:11px;color:#1259b8;text-decoration:underline;left:1006.58px;">bootstrap.min.css:6</span>
<div class="b" style="left:1134px;top:436px;width:17px;height:292px;background:#f1f1f1;"></div>
<div class="b" style="left:1136px;top:453px;width:13px;height:49px;background:#c1c1c1;"></div>
<svg style="left:1138.5px;top:442.8px;" width="8" height="4.4" viewBox="0 0 8 4.4"><path d="M0 4.4L4 0L8 4.4Z" fill="#a3a3a3"/></svg>
<svg style="left:1138.5px;top:717px;" width="8" height="4.4" viewBox="0 0 8 4.4"><path d="M0 0L4 4.4L8 0Z" fill="#505050"/></svg>
<div class="b" style="left:1151px;top:436px;width:1px;height:292px;background:#dcdcdc;"></div>
<div class="b" style="left:1152px;top:436px;width:197px;height:292px;background:#fff;"></div>
<div class="b" style="left:1349px;top:436px;width:17px;height:292px;background:#f1f1f1;"></div>
<div class="b" style="left:1351px;top:453px;width:13px;height:91px;background:#c1c1c1;"></div>
<svg style="left:1353.5px;top:442.8px;" width="8" height="4.4" viewBox="0 0 8 4.4"><path d="M0 4.4L4 0L8 4.4Z" fill="#a3a3a3"/></svg>
<svg style="left:1353.5px;top:717px;" width="8" height="4.4" viewBox="0 0 8 4.4"><path d="M0 0L4 4.4L8 0Z" fill="#505050"/></svg>
<div class="b" style="left:1164px;top:457px;width:173px;height:148px;background:#f9cc9d;border:1px dashed #222;"></div>
<div class="b" style="left:1180px;top:478px;width:141px;height:106px;background:#fddd9b;border:1px solid #111;"></div>
<div class="b" style="left:1195px;top:499px;width:111px;height:64px;background:#c3d08b;border:1px dashed #808080;"></div>
<div class="b" style="left:1211px;top:520px;width:80px;height:22px;background:#8cb6c0;border:1px solid #808080;"></div>
<span class="t" style="top:459px;font-size:11px;color:#222;left:1176.50px;transform:scaleX(0.9071);">margin</span>
<span class="t" style="top:480px;font-size:11px;color:#222;left:1192.60px;transform:scaleX(0.9278);">border</span>
<span class="t" style="top:501px;font-size:11px;color:#222;left:1207.50px;transform:scaleX(0.9194);">padding</span>
<span class="t" style="top:522px;font-size:11px;color:#222;left:1219.25px;transform:scaleX(0.8704);">320 × 356.531</span>
<div class="b" style="left:1249px;top:469px;width:4.5px;height:1px;background:#222;"></div>
<div class="b" style="left:1249px;top:490px;width:4.5px;height:1px;background:#222;"></div>
<div class="b" style="left:1249px;top:511px;width:4.5px;height:1px;background:#222;"></div>
<div class="b" style="left:1249px;top:553px;width:4.5px;height:1px;background:#222;"></div>
<div class="b" style="left:1249px;top:574px;width:4.5px;height:1px;background:#222;"></div>
<div class="b" style="left:1249px;top:595px;width:4.5px;height:1px;background:#222;"></div>
<div class="b" style="left:1172px;top:531.5px;width:4.5px;height:1px;background:#222;"></div>
<div class="b" style="left:1187.7px;top:531.5px;width:4.5px;height:1px;background:#222;"></div>
<div class="b" style="left:1203px;top:531.5px;width:4.5px;height:1px;background:#222;"></div>
<div class="b" style="left:1294.3px;top:531.5px;width:4.5px;height:1px;background:#222;"></div>
<div class="b" style="left:1309.6px;top:531.5px;width:4.5px;height:1px;background:#222;"></div>
<div class="b" style="left:1325.2px;top:531.5px;width:4.5px;height:1px;background:#222;"></div>
<div class="b" style="left:1152px;top:626px;width:197px;height:1px;background:#dedede;"></div>
<span class="t" style="top:634px;font-size:12px;color:#767676;left:1159.00px;transform:scaleX(0.9748);">Filter</span>
<div class="b" style="left:1278px;top:637.5px;width:12px;height:12px;background:#fff;border:1px solid #333;border-radius:2px;"></div>
<span class="t" style="top:634px;font-size:12px;color:#333;left:1296.30px;transform:scaleX(0.9590);">Show all</span>
<div class="b" style="left:1152px;top:659px;width:197px;height:1px;background:#dedede;"></div>
<div class="b" style="left:1152px;top:662px;width:197px;height:32px;background:#f3f3f3;"></div>
<svg style="left:1158px;top:667.5px;" width="5" height="7" viewBox="0 0 5 7"><path d="M0 0V7L5 3.5Z" fill="#6e6e6e"/></svg>
<span class="t m" style="top:662px;font-size:11px;color:#1d1d80;left:1167.50px;">background-color</span>
<div class="b" style="left:1168px;top:680px;width:10px;height:10px;background:#6c757d;"></div>
<span class="t m" style="top:676px;font-size:11px;color:#666;left:1180.00px;">rgb(108, 117, 125)</span>
<svg style="left:1158px;top:699.5px;" width="5" height="7" viewBox="0 0 5 7"><path d="M0 0V7L5 3.5Z" fill="#6e6e6e"/></svg>
<span class="t m" style="top:694px;font-size:11px;color:#1d1d80;left:1167.50px;">box-sizing</span>
<span class="t m" style="top:708px;font-size:11px;color:#666;left:1167.50px;">border-box</span>
<svg style="left:0;top:728px;overflow:hidden" width="1366" height="40" viewBox="0 0 1366 40"><defs><linearGradient id="tb1" gradientUnits="userSpaceOnUse" x1="0" y1="0" x2="680" y2="0"><stop offset="0" stop-color="#c5983f"/><stop offset=".18" stop-color="#c18d33"/><stop offset=".5" stop-color="#c0892d"/><stop offset=".8" stop-color="#be802d"/><stop offset="1" stop-color="#b4732c"/></linearGradient><linearGradient id="tb2" gradientUnits="userSpaceOnUse" x1="750" y1="0" x2="1250" y2="0"><stop offset="0" stop-color="#c3aa76"/><stop offset=".5" stop-color="#bea46d"/><stop offset="1" stop-color="#b4985f"/></linearGradient><filter id="tbb" color-interpolation-filters="sRGB" x="-10%" y="-50%" width="120%" height="200%"><feGaussianBlur stdDeviation="3"/></filter></defs><rect width="1366" height="40" fill="url(#tb1)"/><path d="M752 0H1366V40H759Z" fill="url(#tb2)"/><path d="M673 0H752L759 40H667.5Z" fill="#a08340"/><path d="M1148 -12H1400V52H1286Z" fill="#c8982e" filter="url(#tbb)"/><rect width="1366" height="1" fill="#8a6420" opacity=".7"/></svg>
<svg style="left:11.4px;top:734.3px;" width="26.9" height="26.2" viewBox="0 0 27 27" preserveAspectRatio="none"><path d="M0 3.8L11 2.2V12.9H0ZM12.4 2L27 0V12.9H12.4ZM0 14.2H11V24.9L0 23.3ZM12.4 14.2H27V27L12.4 25.1Z" fill="#fff"/></svg>
<div class="b" style="left:52px;top:729px;width:58px;height:38px;background:rgba(240,240,250,.4);border:1.5px solid rgba(255,252,245,.95);"></div>
<svg style="left:66.5px;top:734px;" width="27" height="29" viewBox="0 0 27 29"><path d="M.4 12.6C1.6 5.2 7 .3 14.2 .3C21.6 .3 26.6 5.4 26.6 13.4V16.6H9.4C9.7 20.6 12.6 22.9 16.9 22.9C20 22.9 22.7 22.1 25.2 20.6V26.6C22.5 28 19.4 28.7 15.8 28.7C7.6 28.7 2.2 23.6 2.2 16.2C2.2 12.2 4 8.9 7.1 6.9C3.9 7.6 1.7 9.8 .4 12.6ZM9.5 11.6H19C18.9 8.4 17.3 6.3 14.4 6.3C11.7 6.3 9.9 8.4 9.5 11.6Z" fill="#0078d7"/></svg>
<svg style="left:127px;top:735px;" width="32" height="29" viewBox="0 0 32 29"><defs><linearGradient id="fo1" x1="0" y1="0" x2="0" y2="1"><stop offset="0" stop-color="#fbf0ba"/><stop offset="1" stop-color="#f2d57a"/></linearGradient><linearGradient id="fo2" x1="0" y1="0" x2="0" y2="1"><stop offset="0" stop-color="#d5eefc"/><stop offset=".45" stop-color="#8ccaf3"/><stop offset="1" stop-color="#4f9fe2"/></linearGradient></defs><path d="M.7 2.4Q.7 .6 2.5 .6H15.4L17 2.8H31.3V12H.7Z" fill="#f4dc90" stroke="#e6cf86" stroke-width=".6"/><rect x="3.9" y=".9" width="2.9" height="1.9" fill="#18b83a"/><rect x="6.8" y=".9" width="9" height="1.9" fill="#fff"/><path d="M9.5 4.8Q9.5 3 11.3 3H24L25.5 5.2H31.3V12H9.5Z" fill="#f6e09a" stroke="#e6cf86" stroke-width=".5"/><rect x="12.2" y="3.1" width="2.6" height="1.8" fill="#dc2a22"/><rect x="14.8" y="3.1" width="8" height="1.8" fill="#fff"/><path d="M17.4 6.8Q17.4 5 19.2 5H29.6Q31.3 5 31.3 6.8V12H17.4Z" fill="#f8e4a4" stroke="#e6cf86" stroke-width=".5"/><rect x="20.2" y="5.1" width="2.6" height="1.8" fill="#1f8ae6"/><rect x="22.8" y="5.1" width="5.6" height="1.8" fill="#fff"/><path d="M.7 7.6H17L18.6 9.4H31.4V26H.7Z" fill="url(#fo1)" stroke="#ead28a" stroke-width=".6"/><path d="M3.9 17.8Q3.9 15.9 5.8 15.9H26.1Q28 15.9 28 17.8V28.8H21.2V22H10.3V28.8H3.9Z" fill="url(#fo2)" stroke="#2f8cdc" stroke-width=".9"/><path d="M5 17.2H27" stroke="#eaf6fe" stroke-width="1"/></svg>
<div class="b" style="left:190px;top:733px;width:30px;height:30px;background:#008a00;"></div>
<svg style="left:190px;top:733px;" width="30" height="30" viewBox="0 0 30 30"><path d="M10.2 9.5V7.4A4.3 4.3 0 0 1 18.8 7.4V9.5" fill="none" stroke="#fff" stroke-width="1.2"/><path d="M4.6 10.4L25.4 7.8V26.6L4.6 24Z" fill="#fff"/><path d="M8.3 13.4L14 12.8V16.9H8.3ZM15.2 12.7L21.8 12V16.9H15.2ZM8.3 18H14V22.2L8.3 21.6ZM15.2 18H21.8V23L15.2 22.3Z" fill="#008a00"/></svg>
<svg style="left:251px;top:732px;" width="32" height="32" viewBox="0 0 32 32"><defs><linearGradient id="sg" x1="0" y1="0" x2="0" y2="1"><stop offset="0" stop-color="#1fae6c"/><stop offset="1" stop-color="#04703e"/></linearGradient></defs><circle cx="16" cy="16" r="16" fill="url(#sg)"/></svg>
<span class="t" style="top:738px;font-size:30px;color:#fff;font-weight:700;left:259.50px;transform:scaleX(0.7494);">S</span>
<div class="b" style="left:300px;top:729px;width:58px;height:38px;background:rgba(255,225,160,.30);border:1px solid rgba(255,240,205,.55);"></div>
<svg style="left:308px;top:728px;" width="42" height="40" viewBox="0 0 42 40"><defs><linearGradient id="pp1" x1="0" y1="0" x2="0" y2="1"><stop offset="0" stop-color="#ff2f86"/><stop offset=".3" stop-color="#d63fd0"/><stop offset=".6" stop-color="#a64bff"/><stop offset="1" stop-color="#6f63ff"/></linearGradient><linearGradient id="pp2" x1=".2" y1="0" x2=".8" y2="1"><stop offset="0" stop-color="#c24bff"/><stop offset=".45" stop-color="#8f58ff"/><stop offset="1" stop-color="#c440ee"/></linearGradient></defs><path d="M24.5 6L32.8 7.3L37 16.7L33.3 20.8L37 28.4L25 35.9L14 31.2L20 12Z" fill="url(#pp2)"/><path d="M10.4 3.9L21.9 7L22 20L12 29.2L8.3 28.6L4.9 10.2Z" fill="url(#pp1)"/><rect x="11.2" y="10.2" width="19.8" height="19.6" fill="#0d0d0d"/><rect x="13" y="26" width="8.1" height="1.9" fill="#fff"/></svg>
<span class="t" style="top:735px;font-size:12px;color:#fff;font-weight:700;left:320.50px;transform:scaleX(1.0365);">PS</span>
<div class="b" style="left:362px;top:729px;width:58px;height:38px;background:rgba(255,225,160,.30);border:1px solid rgba(255,240,205,.55);"></div>
<svg style="left:375px;top:732px;" width="32" height="32" viewBox="0 0 32 32"><rect width="32" height="32" rx="2.6" fill="#4b4b4b"/><path d="M7.76 10.06L24 5.64V11.36L17.4 13.7L24 15.5V21.5L7.76 26.2V20.5L14.3 18.4L7.76 16.8Z" fill="#ff9800"/><path d="M14.3 18.4L24 15.5V21.5Z" fill="#e98a00" opacity=".45"/></svg>
<svg style="left:432px;top:728px;" width="42" height="40" viewBox="0 0 42 40"><defs><radialGradient id="k1" gradientUnits="userSpaceOnUse" cx="21" cy="6" r="17"><stop offset="0" stop-color="#ff3dff"/><stop offset=".45" stop-color="#ff7df0" stop-opacity=".9"/><stop offset="1" stop-color="#ffb0f0" stop-opacity="0"/></radialGradient><radialGradient id="k2" gradientUnits="userSpaceOnUse" cx="32" cy="28" r="13"><stop offset="0" stop-color="#ffff3a"/><stop offset=".5" stop-color="#ffff70" stop-opacity=".85"/><stop offset="1" stop-color="#ffffa0" stop-opacity="0"/></radialGradient><radialGradient id="k3" gradientUnits="userSpaceOnUse" cx="11" cy="29" r="15"><stop offset="0" stop-color="#2ffff5"/><stop offset=".5" stop-color="#6ffcf6" stop-opacity=".85"/><stop offset="1" stop-color="#a0fff8" stop-opacity="0"/></radialGradient><clipPath id="kc2"><circle cx="20.9" cy="20" r="12.8"/></clipPath><filter id="kb" color-interpolation-filters="sRGB"><feGaussianBlur stdDeviation="1.1"/></filter></defs><circle cx="20.9" cy="20" r="12.8" fill="#f1e6fb"/><g clip-path="url(#kc2)"><rect width="42" height="40" fill="url(#k1)"/><rect width="42" height="40" fill="url(#k2)"/><rect width="42" height="40" fill="url(#k3)"/><path d="M13 25C17 30 25 30 27.5 24.5C27 28 25 30.5 21 31C17 31 14 28.5 13 25Z" fill="#3f8fe6" filter="url(#kb)"/></g><path d="M5.8 7.4C9 8 16 12.5 22.4 18.6L20.6 21C13 17 7 11 5.8 7.4Z" fill="#3b4046"/><path d="M22.4 18.6L25.6 21.8L24.2 23.8L20.6 21Z" fill="#c9ccd0"/><path d="M25.4 21.6C28 22 29 25 27.8 28.2C25.6 27 24.4 25 24.3 23.4Z" fill="#26282b"/></svg>
<svg style="left:1040px;top:736px;" width="56" height="23" viewBox="0 0 56 23"><defs><linearGradient id="bg1" x1="0" y1="0" x2="0" y2="1"><stop offset="0" stop-color="#3ee07a"/><stop offset="1" stop-color="#0cb850"/></linearGradient></defs><rect x="51" y="5.5" width="3.6" height="11.5" rx="1.2" fill="#d4d4d4"/><rect x=".8" y=".8" width="51" height="21.4" rx="3.2" fill="#1b1b1b" stroke="#cfcfcf" stroke-width="1.6"/><path d="M2 3.4Q2 2 3.4 2H27V21H3.4Q2 21 2 19.6Z" fill="url(#bg1)"/><path d="M11.4 3.4L4.4 13.2H8.6L6.4 19.6L14.6 9.4H10.2Z" fill="#fff"/></svg>
<span class="t" style="top:737px;font-size:14px;color:#fff;left:1061.40px;transform:scaleX(0.8919);">57%</span>
<svg style="left:1106.5px;top:746.6px;" width="8.6" height="5.4" viewBox="0 0 8.6 5.4"><path d="M0 5.4L4.3 0L8.6 5.4Z" fill="#fff"/></svg>
<svg style="left:1127px;top:740px;" width="17" height="17" viewBox="0 0 17 17"><rect x="1" y="1.6" width="1.7" height="15" fill="#e7a272"/><path d="M2.7 2.4C6 -.2 8.5 4 12 2.6C13.5 2 14.6 1.6 15.6 1.4V10.2C12 10.6 11 12.6 8 11.4C6 10.6 4.4 10.4 2.7 11.2Z" fill="#3fae3f" stroke="#2a8c2e" stroke-width=".6"/></svg>
<svg style="left:1150px;top:741px;" width="18" height="13" viewBox="0 0 18 13"><path d="M4.2 12.2A3.3 3.3 0 0 1 3.6 5.7A4.4 4.4 0 0 1 11.6 3.6A3.4 3.4 0 0 1 15.6 7A2.7 2.7 0 0 1 14.8 12.2Z" fill="#fff" stroke="#5a5140" stroke-width=".7"/><path d="M6.6 12.2A3 3 0 0 1 7.2 6.6A3.6 3.6 0 0 1 13.4 6.4" fill="none" stroke="#5a5140" stroke-width=".7"/></svg>
<svg style="left:1174.5px;top:740.5px;" width="17" height="17" viewBox="0 0 17 17"><rect x=".6" y=".6" width="2" height="15.4" fill="#fff" stroke="#5a5140" stroke-width=".5"/><path d="M2.6 1.8C6 1 8 4 11 3.4C13 3 14.6 2.6 16 2.4C15.2 6 13.6 9 11 10.4C8 11.4 6 9.6 2.6 10.6Z" fill="#fff" stroke="#5a5140" stroke-width=".5"/></svg>
<svg style="left:1199px;top:742.5px;" width="16" height="13" viewBox="0 0 16 13"><rect x="0.4" y="9.9" width="2.3" height="2.6" fill="#fff" stroke="#6b5d3f" stroke-width=".35"/><rect x="3.6" y="7.7" width="2.3" height="4.8" fill="#fff" stroke="#6b5d3f" stroke-width=".35"/><rect x="6.8" y="5.5" width="2.3" height="7" fill="#fff" stroke="#6b5d3f" stroke-width=".35"/><rect x="10" y="3.0999999999999996" width="2.3" height="9.4" fill="#fff" stroke="#6b5d3f" stroke-width=".35"/><rect x="13.2" y="0.5" width="2.3" height="12" fill="#fff" stroke="#6b5d3f" stroke-width=".35"/></svg>
<svg style="left:1225px;top:741.5px;" width="14" height="15" viewBox="0 0 14 15"><path d="M.6 4.8H3.6L8 .8V14.2L3.6 10.2H.6Z" fill="#fff" stroke="#5a5140" stroke-width=".5"/><path d="M10.4 4.2A5 5 0 0 1 10.4 10.8" fill="none" stroke="#fff" stroke-width="1.3"/></svg>
<span class="t" style="top:739px;font-size:12px;color:#fff;left:1254.00px;transform:scaleX(0.9363);">РУС</span>
<span class="t" style="top:731px;font-size:12px;color:#fff;left:1306.20px;transform:scaleX(0.8991);">23:46</span>
<span class="t" style="top:748px;font-size:12px;color:#fff;left:1292.20px;transform:scaleX(0.9157);">23.08.2019</span>
</body></html>
